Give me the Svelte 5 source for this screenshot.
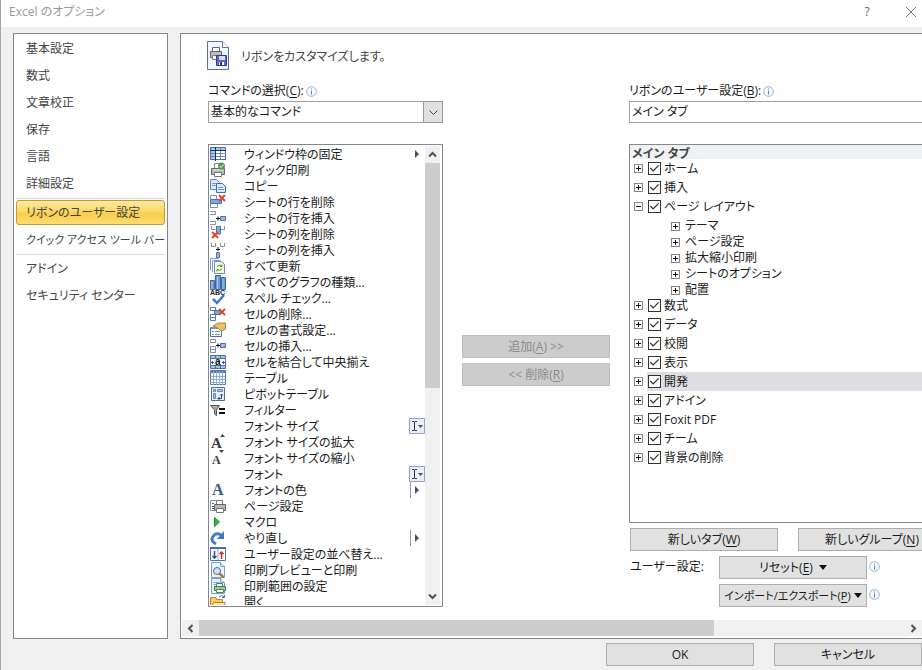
<script>
	const page = '<path d="M1.5 .5h9l4 4v11h-13z" fill="#eaf3ff" stroke="#7c9cc8"/><path d="M10.5.5v4h4" fill="#dbe6f5" stroke="#7c9cc8"/>';
	const redX = (x, y) =>
		`<path d="M${x} ${y}l6 6m0-6l-6 6" stroke="#e0452f" stroke-width="2" fill="none"/>`;
	const printer =
		'<path d="M4.5 6V1.5h7V6" fill="#fff" stroke="#8a8a8a"/><path d="M1.5 6.5h13v6h-13z" fill="#b4b7bb" stroke="#6a6a6a"/><path d="M3 8h10" stroke="#eee"/><path d="M4.500 10.500h7v4h-7z" fill="#fff" stroke="#777"/>';

	const icons = {
		freeze:
			'<path d="M.5 1.500h15v12H.5z" fill="#fff" stroke="#4a6fa5"/><path d="M1 2h14v3H1zM1 5h4v8H1z" fill="#a9c4e8"/><path d="M.5 7.500h15M.5 10.500h15M10.500 1.500v12" stroke="#6488bd" fill="none"/><path d="M5.500 1v14M0 4.500h16" stroke="#17345f"/>',
		quickPrint:
			printer + '<circle cx="11.500" cy="4" r="3.500" fill="#4c9b50"/><path d="M9.500 4l1.500 1.500 2.500-3" stroke="#fff" fill="none"/>',
		copy:
			'<path d="M.5 1.500h6l3 3v7h-9z" fill="#dce9fa" stroke="#5a86c6"/><path d="M2 5.500h5M2 7.500h5" stroke="#6d95cf"/><path d="M6.500 5.500h6l3 3v6h-9z" fill="#dce9fa" stroke="#3f6db3"/><path d="M8 9.500h5M8 11.500h6" stroke="#6d95cf"/>',
		rowDelete:
			'<path d="M.5 5V1.500h6V5M.5 10v3.500h7V10" fill="#fff" stroke="#8090a8"/><path d="M.5 5.500h11v4H.5z" fill="#7fa6de" stroke="#4a70a8"/>' + redX(9, 1),
		rowInsert:
			'<path d="M0 1.500h5.500v3H0M0 11.500h5.500v3H0" fill="#fff" stroke="#8090a8"/><path d="M6 8.500h4M8 6.500v4" stroke="#111"/><path d="M10.500 6.500h5v4h-5z" fill="#9db9e3" stroke="#4a70a8"/>',
		colDelete:
			'<path d="M1.500 0v3.500h4M14.500 0v3.500h-4" fill="none" stroke="#8090a8"/><path d="M6.500 0h4v8h-4z" fill="#7fa6de" stroke="#4a70a8"/>' + redX(2, 6),
		colInsert:
			'<path d="M1.500 1v3.500h4V1M10.500 1v3.500h4V1" fill="#fff" stroke="#8090a8"/><path d="M8 5v4M6 7.500h4" stroke="#111"/><path d="M6.500 10.500h3v5h-3z" fill="#9db9e3" stroke="#4a70a8"/>',
		refresh:
			'<path d="M.5 12V.5h8M2.500 14V2.500h8" fill="none" stroke="#7c9cc8"/><path d="M4.500 3.500h7l3 3v9h-10z" fill="#f4f8e8" stroke="#6d8dbb"/><path d="M7 8.500q2-2.500 4.500-.5M12 6.500v2h-2M12 11q-2 2.500-4.500.5M7 13.500v-2h2" fill="none" stroke="#4f9d35"/>',
		chart:
			'<path d="M.5 6.500h4v9h-4zM5.500 1.500h5v14h-5zM11.500 3.500h4v12h-4z" fill="#6f9bd6" stroke="#4068a3"/><path d="M2 8v7M7.500 3v12M13 5v10" stroke="#a9c4e8"/>',
		spell:
			'<text x="0" y="5" font-size="7" font-weight="700" font-family="Liberation Sans" fill="#222">ABC</text><path d="M3 9l4 4 7-8" fill="none" stroke="#4a78c6" stroke-width="2.500"/>',
		cellDelete:
			'<path d="M.5 1.500h5v3h-5zM.5 8.500h5v6h-5zM.5 11.500h5" fill="#fff" stroke="#5a7aa8"/><path d="M4.500 4.500h6v4h-6z" fill="#7fa6de" stroke="#4a70a8"/>' + redX(9, 3),
		format:
			'<path d="M.5 5.500h11v9H.5z" fill="#fff" stroke="#4a70a8"/><path d="M1 5h10v2H1z" fill="#6d95cf"/><path d="M2 9.500h2M5 9.500h5M2 12.500h2M5 12.500h5" stroke="#6d8dbb"/><path d="M3 4l5-3h7.500v6l-4 2-4-3z" fill="#e9c26b" stroke="#a5803c"/>',
		cellInsert:
			'<path d="M.5 1.500h5v3h-5zM.5 8.500h5v6h-5zM.5 11.500h5" fill="#fff" stroke="#8090a8"/><path d="M6 7.500h4M8 5.500v4" stroke="#111"/><path d="M10.500 5.500h5v4h-5z" fill="#9db9e3" stroke="#4a70a8"/>',
		merge:
			'<path d="M.5 1.500h15v13H.5z" fill="#fff" stroke="#4a70a8"/><path d="M1 2h14v2H1zM1 12h14v2H1z" fill="#a9c4e8"/><path d="M.5 4.500h15M.5 11.500h15M5.500 1v3M10.500 1v3M5.500 12v3M10.500 12v3" stroke="#4a70a8"/><text x="5" y="11" font-size="10" font-weight="700" font-family="Liberation Sans" fill="#111">a</text><path d="M1 8.500h3M12 8.500h3M2.500 7v3M13.500 7v3" stroke="#2a5cb0"/>',
		table:
			'<path d="M.5 .5h15v14H.5z" fill="#fff" stroke="#5078b4"/><path d="M1 1h14v2H1z" fill="#5078b4"/><path d="M.5 6.500h15M.5 9.500h15M.5 12.500h15M3.500 1v14M6.500 1v14M9.500 1v14M12.500 1v14" stroke="#8fabd6"/>',
		pivot:
			'<path d="M1.500 1.500h13v13h-13z" fill="#eaf1fb" stroke="#4a70a8"/><path d="M3.500 3.500h2v2h-2zM7.500 3.500h5v2h-5zM3.500 7.500h2v5h-2z" fill="#a9c4e8" stroke="#6488bd"/><path d="M8 12.500h3.500V8M10 9.500L11.500 8 13 9.500M9.500 11L8 12.500 9.500 14" fill="none" stroke="#1f4f9c"/>',
		filter:
			'<path d="M.5 3.500h9L6.500 8v5.500l-2-1.500V8z" fill="#aaa" stroke="#555"/><path d="M9 7h6M9 11h6" stroke="#111" stroke-width="2"/>',
		fontUp:
			'<text x="1" y="14" font-size="15" font-weight="700" font-family="Liberation Serif" fill="#3b3b3b">A</text><path d="M10 3l2.500-3L15 3z" fill="#444"/>',
		fontDown:
			'<text x="2" y="14" font-size="12" font-weight="700" font-family="Liberation Serif" fill="#3b3b3b">A</text><path d="M9 0h5l-2.500 3z" fill="#444"/>',
		fontColor:
			'<text x="2" y="13" font-size="16" font-weight="700" font-family="Liberation Serif" fill="#36598c">A</text>',
		pageSetup:
			'<path d="M.5 2.500h9v10h-9z" fill="#fff" stroke="#8594a8"/><path d="M2 5.500h2M2 8.500h2M2 10.500h2" stroke="#36598c"/><path d="M6.500 6V2.500h6V6" fill="#fff" stroke="#777"/><path d="M4.500 6.500h11v6h-11z" fill="#b5b8bd" stroke="#666"/><path d="M6.500 10.500h7v4h-7z" fill="#fff" stroke="#777"/>',
		macro: '<path d="M4.500 3.500v9l5-4.500z" fill="#3fb54a" stroke="#1e8431"/>',
		redo:
			'<path d="M6 14Q0 11 3 6.500T11 5" fill="none" stroke="#4a7ccb" stroke-width="3"/><path d="M14 1v8H7z" fill="#3f74c6"/>',
		sort:
			'<path d="M.5 1.500h15v13H.5z" fill="#fff" stroke="#4a70a8"/><path d="M0 1h16v2H0z" fill="#4a70a8"/><path d="M8 3v11" stroke="#8fabd6"/><path d="M4.500 5v7M2.500 10l2 2 2-2" fill="none" stroke="#1f4f9c" stroke-width="1.500"/><path d="M11.500 13V6M9.500 8l2-2 2 2" fill="none" stroke="#c8372a" stroke-width="1.500"/>',
		preview:
			page + '<circle cx="7" cy="9" r="3.500" fill="#cfe3f8" stroke="#5b6c84"/><path d="M9.500 11.500l4 4" stroke="#b07832" stroke-width="2.500"/>',
		printArea:
			page + '<path d="M3.500 4.500h6M3.500 6.500h3" stroke="#79a4dc"/><path d="M6.500 8V5.500h6V8" fill="#fff" stroke="#4a8a55"/><path d="M4.500 8.500h11v4h-11z" fill="#9cc9a2" stroke="#3c7a48"/><path d="M6.500 11.500h7v3h-7z" fill="#fff" stroke="#4a8a55"/>',
		open:
			'<path d="M.5 14.500v-11h5l1 2h6v9z" fill="#f5cf6b" stroke="#b98421"/><path d="M.5 14.500l3-6h12l-3 6z" fill="#fce6a0" stroke="#b98421"/><path d="M9 3q3-3 5 0M14.500 1v2.500H12" fill="none" stroke="#3f74c6"/>'
	};

	const commands = [
		{ icon: 'freeze', label: 'ウィンドウ枠の固定', mark: 'menu' },
		{ icon: 'quickPrint', label: 'クイック印刷' },
		{ icon: 'copy', label: 'コピー' },
		{ icon: 'rowDelete', label: 'シートの行を削除' },
		{ icon: 'rowInsert', label: 'シートの行を挿入' },
		{ icon: 'colDelete', label: 'シートの列を削除' },
		{ icon: 'colInsert', label: 'シートの列を挿入' },
		{ icon: 'refresh', label: 'すべて更新' },
		{ icon: 'chart', label: 'すべてのグラフの種類...' },
		{ icon: 'spell', label: 'スペル チェック...' },
		{ icon: 'cellDelete', label: 'セルの削除...' },
		{ icon: 'format', label: 'セルの書式設定...' },
		{ icon: 'cellInsert', label: 'セルの挿入...' },
		{ icon: 'merge', label: 'セルを結合して中央揃え' },
		{ icon: 'table', label: 'テーブル' },
		{ icon: 'pivot', label: 'ピボットテーブル' },
		{ icon: 'filter', label: 'フィルター' },
		{ icon: '', label: 'フォント サイズ', mark: 'combo' },
		{ icon: 'fontUp', label: 'フォント サイズの拡大' },
		{ icon: 'fontDown', label: 'フォント サイズの縮小' },
		{ icon: '', label: 'フォント', mark: 'combo' },
		{ icon: 'fontColor', label: 'フォントの色', mark: 'split' },
		{ icon: 'pageSetup', label: 'ページ設定' },
		{ icon: 'macro', label: 'マクロ' },
		{ icon: 'redo', label: 'やり直し', mark: 'split' },
		{ icon: 'sort', label: 'ユーザー設定の並べ替え...' },
		{ icon: 'preview', label: '印刷プレビューと印刷' },
		{ icon: 'printArea', label: '印刷範囲の設定' },
		{ icon: 'open', label: '開く' }
	];

	const navGroups = [
		['基本設定', '数式', '文章校正', '保存', '言語', '詳細設定'],
		['リボンのユーザー設定', 'クイック アクセス ツール バー'],
		['アドイン', 'セキュリティ センター']
	];
	let current = $state('リボンのユーザー設定');

	let tabs = $state([
		{ label: 'ホーム', checked: true },
		{ label: '挿入', checked: true },
		{
			label: 'ページ レイアウト',
			checked: true,
			open: true,
			groups: ['テーマ', 'ページ設定', '拡大縮小印刷', 'シートのオプション', '配置']
		},
		{ label: '数式', checked: true },
		{ label: 'データ', checked: true },
		{ label: '校閲', checked: true },
		{ label: '表示', checked: true },
		{ label: '開発', checked: true },
		{ label: 'アドイン', checked: true },
		{ label: 'Foxit PDF', checked: true },
		{ label: 'チーム', checked: true },
		{ label: '背景の削除', checked: true }
	]);
	let selectedTab = $state('開発');
</script>

{#snippet info()}
	<svg class="info" viewBox="0 0 11 11" aria-hidden="true">
		<circle cx="5.5" cy="5.5" r="4.8" fill="#fafcff" stroke="#8fb0d6" />
		<path d="M5 2.500h1v1H5zM5 4.500h1v4H5z" fill="#5580b8" />
	</svg>
{/snippet}

{#snippet chevron(d)}
	<svg class="chevron" viewBox="0 0 9 9" aria-hidden="true">
		<path {d} fill="none" stroke="#505050" stroke-width="2" />
	</svg>
{/snippet}

<div class="window">
	<header class="titlebar">
		<h1>Excel のオプション</h1>
		<button class="caption" aria-label="ヘルプ">?</button>
		<button class="caption" aria-label="閉じる">
			<svg viewBox="0 0 12 12" width="12" height="12">
				<path d="M1 1l10 10M11 1L1 11" stroke="#777" fill="none" />
			</svg>
		</button>
	</header>

	<div class="body">
		<nav class="sidebar">
			{#each navGroups as group}
				<div class="nav-group">
					{#each group as item}
						<a
							href="#{item}"
							class:active={current === item}
							class:long={item.length > 12}
							onclick={() => (current = item)}>{item}</a
						>
					{/each}
				</div>
			{/each}
		</nav>

		<main class="panel">
			<div class="heading">
				<svg viewBox="0 0 22 29" width="22" height="29" aria-hidden="true">
					<path d="M.5 .5h15l6 6v22H.5z" fill="#eef5ff" stroke="#5a709c" />
					<path d="M15.500.5v6h6" fill="#fff" stroke="#5a709c" />
					<path d="M5.500 11V6.500h7V11" fill="#fff" stroke="#666" />
					<path d="M3.500 10.500h11v6h-11z" fill="#b8bcc4" stroke="#666" />
					<path d="M5.500 14.500h6v4h-6z" fill="#fff" stroke="#777" />
					<path d="M9.500 14.500h10v10h-10z" fill="#5a67bd" stroke="#343d8a" />
					<path d="M12 15h6v4h-6z" fill="#d5dcf6" />
					<path d="M12 21h5v3h-5z" fill="#fff" />
					<path d="M13 21h2v3h-2z" fill="#28317e" />
				</svg>
				<h2>リボンをカスタマイズします。</h2>
			</div>

			<div class="columns">
				<section class="column">
					<label for="source">コマンドの選択(<u>C</u>):{@render info()}</label>
					<div class="select">
						<select id="source">
							<option>基本的なコマンド</option>
						</select>
						<span class="drop">
							<svg viewBox="0 0 9 9" width="9" height="9">
								<path d="M.5 2.500l4 4 4-4" fill="none" stroke="#444" />
							</svg>
						</span>
					</div>
					<div class="listbox">
						<ul class="commands">
							{#each commands as command}
								<li>
									<svg class="icon" viewBox="0 0 16 16" aria-hidden="true">
										{@html icons[command.icon] ?? ''}
									</svg>
									<span class="name">{command.label}</span>
									{#if command.mark}
										<svg class="mark" viewBox="0 0 16 16" aria-hidden="true">
											{#if command.mark === 'combo'}
												<path d="M.5 .5h15v15H.5z" fill="#e8eefa" stroke="#94a4c4" />
												<path d="M3 3.500h2l.5.5.5-.5h2M5.500 4v8M3 12.500h2l.5-.5.5.5h2" fill="none" stroke="#333" />
												<path d="M9 7h5l-2.500 3z" fill="#41507a" />
											{:else}
												{#if command.mark === 'split'}
													<path d="M1.500 0v16" stroke="#999" />
												{/if}
												<path d="M6 4v8l4-4z" fill="#4b4b6b" />
											{/if}
										</svg>
									{/if}
								</li>
							{/each}
						</ul>
						<div class="vscroll">
							{@render chevron('M1 6.500l3.500-3.500 3.500 3.500')}
							<div class="track"><div class="thumb"></div></div>
							{@render chevron('M1 2.500l3.500 3.500 3.500-3.500')}
						</div>
					</div>
				</section>

				<div class="transfer">
					<button class="btn" disabled>追加(<u>A</u>) &gt;&gt;</button>
					<button class="btn" disabled>&lt;&lt; 削除(<u>R</u>)</button>
				</div>

				<section class="column">
					<label for="target">リボンのユーザー設定(<u>B</u>):{@render info()}</label>
					<div class="select">
						<select id="target">
							<option>メイン タブ</option>
						</select>
					</div>
					<div class="right-body">
						<div class="tree">
							<h3>メイン タブ</h3>
							<ul>
								{#each tabs as tab}
									<li>
										<div class="tab-row">
											<button
												class="expander"
												class:open={tab.open}
												aria-label="展開"
												onclick={() => (tab.open = !tab.open)}
											></button>
											<label class:selected={selectedTab === tab.label}>
												<input type="checkbox" bind:checked={tab.checked} />
												{tab.label}
											</label>
										</div>
										{#if tab.open && tab.groups}
											<ul class="groups">
												{#each tab.groups as group}
													<li class="group-row">
														<button class="expander" aria-label="展開"></button>
														{group}
													</li>
												{/each}
											</ul>
										{/if}
									</li>
								{/each}
							</ul>
						</div>
						<div class="button-row">
							<button class="btn">新しいタブ(<u>W</u>)</button>
							<button class="btn">新しいグループ(<u>N</u>)</button>
						</div>
						<div class="custom-row">
							<span>ユーザー設定:</span>
							<button class="btn">リセット(<u>E</u>)<i class="caret"></i></button>
							{@render info()}
						</div>
						<div class="custom-row">
							<span></span>
							<button class="btn long">インポート/エクスポート(<u>P</u>)<i class="caret"></i></button>
							{@render info()}
						</div>
					</div>
				</section>
			</div>

			<div class="hscroll">
				{@render chevron('M6.500 1l-3.500 3.500 3.500 3.500')}
				<div class="track"><div class="thumb"></div></div>
				{@render chevron('M2.500 1l3.500 3.500-3.500 3.500')}
			</div>
		</main>
	</div>

	<footer>
		<button class="btn">OK</button>
		<button class="btn">キャンセル</button>
	</footer>
</div>

<style>
	:global(body) {
		margin: 0;
		background: #f0f0f0;
	}

	.window {
		box-sizing: border-box;
		min-height: 100vh;
		border-left: 1px solid #a6a6a6;
		background: #f0f0f0;
		color: #1a1a1a;
		font-family: 'Open Sans', 'Noto Sans CJK JP', sans-serif;
		font-size: 12px;
		line-height: 16px;
		font-feature-settings: 'palt';
		white-space: nowrap;
		overflow: hidden;
	}

	button,
	select {
		font: inherit;
		font-feature-settings: inherit;
		color: inherit;
	}

	h1,
	h2,
	h3,
	ul {
		margin: 0;
		padding: 0;
		font-size: 12px;
		font-weight: 400;
		list-style: none;
	}

	u {
		text-underline-offset: 2px;
	}

	.titlebar {
		display: flex;
		align-items: center;
		height: 27px;
		padding: 0 4px 4px 8px;
		box-sizing: border-box;
		background: #fff;
		color: #999;
	}

	.titlebar h1 {
		flex: 1;
	}

	.caption {
		display: grid;
		place-items: center;
		width: 14px;
		height: 20px;
		margin-left: 30px;
		padding: 0;
		border: 0;
		background: none;
		color: #666;
	}

	.body {
		display: flex;
		gap: 12px;
		padding: 6px 0 4px 12px;
	}

	.sidebar {
		box-sizing: border-box;
		flex: none;
		width: 155px;
		padding: 1px 2px;
		border: 1px solid #828790;
		background: #fff;
	}

	.nav-group + .nav-group {
		border-top: 1px solid #dcdcdc;
		margin-top: 1px;
	}

	.sidebar a {
		display: block;
		padding: 0 0 0 9px;
		border: 1px solid transparent;
		line-height: 25px;
		color: #444;
		text-decoration: none;
	}

	.sidebar a.active {
		margin: 1px 0;
		border-color: #c29b29;
		border-radius: 3px;
		background: linear-gradient(#fde9a0, #fbd868 45%, #fbcd4a 55%, #fddd72);
		line-height: 23px;
	}

	.sidebar a.long,
	.btn.long {
		font-size: 11px;
	}

	.panel {
		flex: 1;
		min-width: 0;
		padding: 7px 0 2px;
		border: 1px solid #828790;
		border-right: 0;
		background: #fff;
		overflow: hidden;
	}

	.heading {
		display: flex;
		align-items: center;
		gap: 12px;
		margin: 0 0 12px 26px;
	}

	.heading h2 {
		padding-top: 3px;
		color: #444;
	}

	.columns {
		display: grid;
		grid-template-columns: 235px 148px minmax(317px, 1fr);
		gap: 19px;
		padding-left: 27px;
	}

	.column > label {
		display: flex;
		align-items: center;
		height: 16px;
		padding-top: 1px;
		margin-bottom: 2px;
	}

	.info {
		flex: none;
		width: 11px;
		height: 11px;
		margin-left: 2px;
	}

	.select {
		position: relative;
		margin-bottom: 21px;
	}

	select {
		display: block;
		box-sizing: border-box;
		width: 100%;
		height: 22px;
		padding: 0 2px;
		border: 1px solid #a0a0a0;
		border-radius: 0;
		background: #fff;
		appearance: none;
	}

	.drop {
		position: absolute;
		top: 0;
		right: 0;
		display: grid;
		place-items: center;
		box-sizing: border-box;
		width: 20px;
		height: 22px;
		border: 1px solid #999;
		background: #e1e1e1;
		pointer-events: none;
	}

	.listbox {
		display: flex;
		box-sizing: border-box;
		height: 463px;
		padding: 1px 2px 1px 1px;
		border: 1px solid #828790;
		overflow: hidden;
	}

	.commands {
		flex: 1;
		overflow: hidden;
	}

	.commands li {
		display: flex;
		height: 16px;
		line-height: 18px;
	}

	.icon,
	.mark {
		flex: none;
		width: 16px;
		height: 16px;
	}

	.name {
		flex: 1;
		margin-left: 18px;
	}

	.vscroll {
		display: flex;
		flex-direction: column;
		align-items: center;
		width: 15px;
		background: #f0f0f0;
	}

	.chevron {
		flex: none;
		width: 9px;
		height: 9px;
		margin: 4px;
	}

	.track {
		flex: 1;
	}

	.thumb {
		background: #cdcdcd;
	}

	.vscroll .thumb {
		width: 15px;
		height: 53%;
	}

	.transfer {
		display: flex;
		flex-direction: column;
		gap: 5px;
		padding-top: 253px;
	}

	.btn {
		box-sizing: border-box;
		flex: none;
		width: 148px;
		height: 23px;
		padding: 0;
		border: 1px solid #adadad;
		background: #e1e1e1;
	}

	.btn:disabled {
		border-color: #bfbfbf;
		background: #ccc;
		color: #8a8a8a;
	}

	.right-body {
		display: flex;
		flex-direction: column;
		gap: 5px;
		height: 463px;
	}

	.tree {
		flex: 1;
		border: 1px solid #828790;
	}

	.tree h3 {
		height: 14px;
		padding-left: 2px;
		background: #eff1f5;
		color: #444;
		font-weight: 700;
		line-height: 18px;
	}

	.tab-row {
		display: flex;
		align-items: center;
		height: 19px;
		padding-left: 4px;
	}

	.tab-row label {
		display: flex;
		flex: 1;
		align-items: center;
		gap: 3px;
		height: 19px;
		margin-left: 4px;
		padding-left: 1px;
	}

	.selected {
		background: #dedee3;
	}

	.groups {
		margin: 2px 0 -2px;
	}

	.group-row {
		display: flex;
		align-items: center;
		gap: 5px;
		height: 16px;
		padding-left: 41px;
	}

	.expander {
		flex: none;
		box-sizing: border-box;
		width: 9px;
		height: 9px;
		padding: 1px;
		border: 1px solid #848484;
		background:
			linear-gradient(#111, #111) center / 5px 1px no-repeat,
			linear-gradient(#111, #111) center / 1px 5px no-repeat,
			#fff;
	}

	.expander.open {
		background: linear-gradient(#111, #111) center / 5px 1px no-repeat, #fff;
	}

	input[type='checkbox'] {
		display: grid;
		place-items: center;
		box-sizing: border-box;
		width: 13px;
		height: 13px;
		margin: 0;
		border: 1px solid #333;
		background: #fff;
		appearance: none;
	}

	input[type='checkbox']:checked::after {
		content: '';
		width: 11px;
		height: 11px;
		background: #333;
		clip-path: polygon(8% 50%, 16% 42%, 38% 64%, 84% 18%, 92% 26%, 38% 80%);
	}

	.button-row {
		display: flex;
		gap: 20px;
		padding-left: 1px;
	}

	.custom-row {
		display: grid;
		grid-template-columns: 89px 148px auto;
		padding-left: 1px;
		line-height: 22px;
	}

	.custom-row .btn {
		display: flex;
		align-items: center;
		justify-content: center;
	}

	.custom-row .info {
		margin-top: 5px;
	}

	.caret {
		margin-left: 6px;
		border: 4px solid transparent;
		border-top: 5px solid #111;
		border-bottom: 0;
	}

	.btn.long .caret {
		margin-left: 3px;
	}

	.hscroll {
		display: flex;
		align-items: center;
		height: 16px;
		margin: 13px 0 0 1px;
		background: #f0f0f0;
	}

	.hscroll .thumb {
		width: 73%;
		height: 16px;
	}

	footer {
		display: flex;
		justify-content: flex-end;
		gap: 20px;
	}
</style>
